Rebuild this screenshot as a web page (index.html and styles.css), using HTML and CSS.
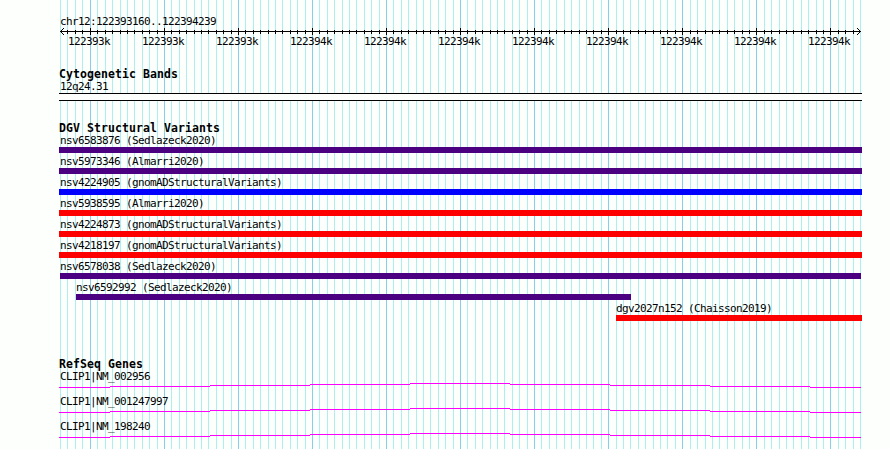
FILE: index.html
```
<!DOCTYPE html>
<html lang="en">
<head>
    <meta charset="UTF-8">
    <title>chr12:122393160..122394239</title>
    <link rel="stylesheet" href="styles.css">
</head>
<body>
    <div class="browser">
        <svg class="grid" width="890" height="449" shape-rendering="crispEdges">
            <defs>
                <path id="minor" d="M60.5 0v449M67.5 0v449M75.5 0v449M82.5 0v449
                    M97.5 0v449M105.5 0v449M112.5 0v449M120.5 0v449M127.5 0v449M134.5 0v449M142.5 0v449M149.5 0v449M157.5 0v449
                    M171.5 0v449M179.5 0v449M186.5 0v449M194.5 0v449M201.5 0v449M208.5 0v449M216.5 0v449M223.5 0v449M231.5 0v449
                    M245.5 0v449M253.5 0v449M260.5 0v449M268.5 0v449M275.5 0v449M282.5 0v449M290.5 0v449M297.5 0v449M305.5 0v449
                    M319.5 0v449M327.5 0v449M334.5 0v449M342.5 0v449M349.5 0v449M356.5 0v449M364.5 0v449M371.5 0v449M379.5 0v449
                    M393.5 0v449M401.5 0v449M408.5 0v449M416.5 0v449M423.5 0v449M430.5 0v449M438.5 0v449M445.5 0v449M453.5 0v449
                    M467.5 0v449M475.5 0v449M482.5 0v449M490.5 0v449M497.5 0v449M504.5 0v449M512.5 0v449M519.5 0v449M527.5 0v449
                    M541.5 0v449M549.5 0v449M556.5 0v449M564.5 0v449M571.5 0v449M579.5 0v449M586.5 0v449M593.5 0v449M601.5 0v449
                    M616.5 0v449M623.5 0v449M630.5 0v449M638.5 0v449M645.5 0v449M653.5 0v449M660.5 0v449M667.5 0v449M675.5 0v449
                    M690.5 0v449M697.5 0v449M705.5 0v449M712.5 0v449M719.5 0v449M727.5 0v449M734.5 0v449M742.5 0v449M749.5 0v449
                    M764.5 0v449M771.5 0v449M779.5 0v449M786.5 0v449M793.5 0v449M801.5 0v449M808.5 0v449M816.5 0v449M823.5 0v449
                    M838.5 0v449M845.5 0v449M853.5 0v449M860.5 0v449"/>
                <path id="major" d="M90.5 0v449M164.5 0v449M238.5 0v449M312.5 0v449M386.5 0v449M460.5 0v449
                    M534.5 0v449M608.5 0v449M682.5 0v449M756.5 0v449M830.5 0v449"/>
            </defs>
            <use href="#minor" class="minor"/>
            <use href="#major" class="major"/>
        </svg>

        <div class="ruler">
            <div class="region">chr12:122393160..122394239</div>
            <svg class="axis" width="890" height="7" shape-rendering="crispEdges">
                <path d="M60 3.5h801"/>
                <svg x="64" y="2" width="793" height="4"><use href="#minor" x="-64"/></svg>
                <use href="#major"/>
                <path class="arrow" d="M61 2h1v1h-1zM62 1h1v1h-1zM63 0h1v1h-1zM61 4h1v1h-1zM62 5h1v1h-1zM63 6h1v1h-1zM859 2h1v1h-1zM858 1h1v1h-1zM857 0h1v1h-1zM859 4h1v1h-1zM858 5h1v1h-1zM857 6h1v1h-1z"/>
            </svg>
            <div class="ticks">
                <span>122393k</span><span>122393k</span><span>122393k</span><span>122394k</span><span>122394k</span><span>122394k</span><span>122394k</span><span>122394k</span><span>122394k</span><span>122394k</span><span>122394k</span>
            </div>
        </div>

        <div class="track bands">
            <h2>Cytogenetic Bands</h2>
            <div class="label">12q24.31</div>
            <div class="band"></div>
        </div>

        <div class="track variants">
            <h2>DGV Structural Variants</h2>
            <div class="variant"><div class="label">nsv6583876 (Sedlazeck2020)</div><div class="bar complex"></div></div>
            <div class="variant"><div class="label">nsv5973346 (Almarri2020)</div><div class="bar complex"></div></div>
            <div class="variant"><div class="label">nsv4224905 (gnomADStructuralVariants)</div><div class="bar gain"></div></div>
            <div class="variant"><div class="label">nsv5938595 (Almarri2020)</div><div class="bar loss"></div></div>
            <div class="variant"><div class="label">nsv4224873 (gnomADStructuralVariants)</div><div class="bar loss"></div></div>
            <div class="variant"><div class="label">nsv4218197 (gnomADStructuralVariants)</div><div class="bar loss"></div></div>
            <div class="variant"><div class="label">nsv6578038 (Sedlazeck2020)</div><div class="bar complex inset"></div></div>
            <div class="variant left"><div class="label">nsv6592992 (Sedlazeck2020)</div><div class="bar complex"></div></div>
            <div class="variant right"><div class="label">dgv2027n152 (Chaisson2019)</div><div class="bar loss"></div></div>
        </div>

        <div class="track genes">
            <h2>RefSeq Genes</h2>
            <div class="gene">
                <div class="label">CLIP1|NM_002956</div>
                <svg class="intron" width="803" height="5" shape-rendering="crispEdges"><path id="intron" d="M0 4.5h51M51 3.5h100M151 2.5h100M251 1.5h100M351 .5h100M451 1.5h100M551 2.5h100M651 3.5h100M751 4.5h51"/></svg>
            </div>
            <div class="gene">
                <div class="label">CLIP1|NM_001247997</div>
                <svg class="intron" width="803" height="5" shape-rendering="crispEdges"><use href="#intron"/></svg>
            </div>
            <div class="gene">
                <div class="label">CLIP1|NM_198240</div>
                <svg class="intron" width="803" height="5" shape-rendering="crispEdges"><use href="#intron"/></svg>
            </div>
        </div>
    </div>
</body>
</html>
```
FILE: styles.css
```
* {
    margin: 0;
    padding: 0;
    box-sizing: border-box;
}

body {
    background: #fdfffc;
    color: #000;
    font-family: "DejaVu Sans Mono", monospace;
    font-size: 11px;
    line-height: 14px;
    letter-spacing: -0.622px;
    white-space: nowrap;
}

.browser {
    position: relative;
    width: 890px;
    height: 449px;
    overflow: hidden;
    display: flex;
    flex-direction: column;
}

/* grid lines run behind every track */
.grid {
    position: absolute;
    top: 0;
    left: 0;
    z-index: -1;
}

svg {
    display: block;
    fill: none;
    stroke: #000;
}

.minor {
    stroke: #afeeee;
}

.major {
    stroke: #87ceeb;
}

.ruler {
    padding-top: 15px;
    height: 68px;
}

.region {
    height: 13px;
    padding-left: 60px;
}

.arrow {
    fill: #000;
    stroke: none;
}

.ticks {
    display: flex;
    gap: 32px;
    padding-left: 68px;
}

.ticks span {
    width: 42px;
}

.track {
    width: 803px;
    margin-left: 59px;
}

h2 {
    font-size: 11.5px;
    line-height: 12px;
    letter-spacing: 0.077px;
    height: 12px;
}

.label {
    height: 12px;
    padding-left: 1px;
}

.bands {
    height: 54px;
}

.band {
    height: 8px;
    margin-top: 1px;
    background: #fdfffc;
    border: solid #000;
    border-width: 1px 0;
}

.variants {
    height: 236px;
}

.variant {
    height: 21px;
}

.bar {
    height: 6px;
    margin-top: 1px;
}

.complex {
    background: #4b0082;
}

.gain {
    background: #00f;
}

.loss {
    background: #f00;
}

.inset {
    margin-left: 1px;
    margin-right: 1px;
}

.left {
    width: 555px;
    margin-left: 17px;
}

.right {
    width: 246px;
    margin-left: 557px;
}

.left .label,
.right .label {
    padding-left: 0;
}

.gene {
    height: 25px;
}

.intron {
    stroke: #f0f;
    margin-top: 1px;
}
```
